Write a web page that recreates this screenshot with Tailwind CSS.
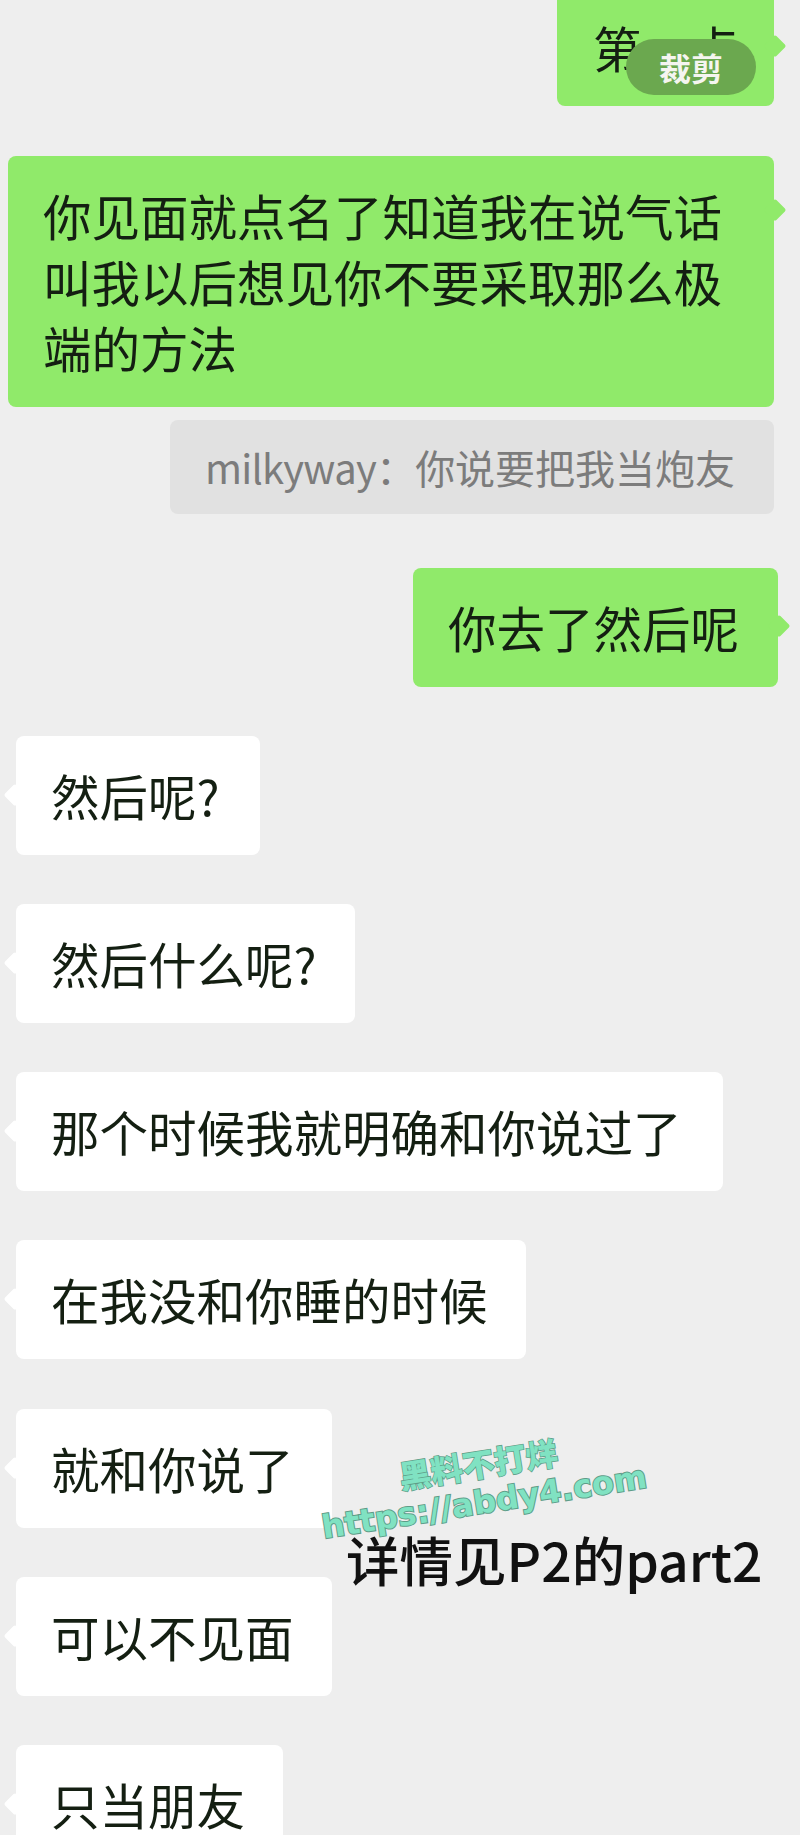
<!DOCTYPE html>
<html lang="zh-CN">
<head>
    <meta charset="UTF-8">
    <meta name="viewport" content="width=device-width, initial-scale=1.0">
    <script src="https://cdn.jsdelivr.net/npm/@tailwindcss/browser@4"></script>
    <title>聊天记录</title>
</head>
<body class="bg-[#eeeeee]">
    <div class="relative h-[1835px] w-[800px] overflow-hidden bg-[#eeeeee] font-['Noto_Sans_CJK_SC','Noto_Sans',sans-serif] text-[48.5px] leading-[66px] text-[#141f12]">
        <div class="flex flex-col items-start">
            <!-- outgoing -->
            <div class="relative mt-[-12px] ml-[557px] h-[118px] w-[217px] rounded-lg bg-[#90ea6a] py-[26px] pl-[36px] whitespace-nowrap">
                第一点
                <div class="absolute top-[50px] right-[-9px] size-[16px] rotate-45 rounded-[2px] bg-[#90ea6a]"></div>
                <div class="absolute top-[51px] left-[69px] flex h-[56px] w-[130px] items-center justify-center rounded-full bg-[#6ba84f] text-[32px] leading-none font-bold text-[#f5f5f0]">裁剪</div>
            </div>

            <div class="relative mt-[50px] ml-[8px] h-[251px] w-[766px] rounded-lg bg-[#90ea6a] py-[26px] pl-[35px]">
                <p>你见面就点名了知道我在说气话</p>
                <p>叫我以后想见你不要采取那么极</p>
                <p>端的方法</p>
                <div class="absolute top-[46px] right-[-9px] size-[16px] rotate-45 rounded-[2px] bg-[#90ea6a]"></div>
            </div>

            <div class="mt-[13px] ml-[170px] flex h-[94px] w-[604px] items-center rounded-lg bg-[#e1e1e1] pl-[35px] text-[40px] leading-none whitespace-nowrap text-[#7c7c7c]"><span class="tracking-[-0.8px]">milkyway：</span>你说要把我当炮友</div>

            <div class="relative mt-[54px] ml-[413px] h-[119px] w-[365px] rounded-lg bg-[#90ea6a] py-[26px] pl-[35px] whitespace-nowrap">
                你去了然后呢
                <div class="absolute top-[50px] right-[-9px] size-[16px] rotate-45 rounded-[2px] bg-[#90ea6a]"></div>
            </div>

            <!-- incoming -->
            <div class="relative mt-[49px] ml-[16px] h-[119px] w-[244px] rounded-lg bg-white py-[26px] pl-[35px] whitespace-nowrap">
                然后呢?
                <div class="absolute top-[51px] left-[-9px] size-[16px] rotate-45 rounded-[2px] bg-white"></div>
            </div>
            <div class="relative mt-[49px] ml-[16px] h-[119px] w-[339px] rounded-lg bg-white py-[26px] pl-[35px] whitespace-nowrap">
                然后什么呢?
                <div class="absolute top-[51px] left-[-9px] size-[16px] rotate-45 rounded-[2px] bg-white"></div>
            </div>
            <div class="relative mt-[49px] ml-[16px] h-[119px] w-[707px] rounded-lg bg-white py-[26px] pl-[35px] whitespace-nowrap">
                那个时候我就明确和你说过了
                <div class="absolute top-[51px] left-[-9px] size-[16px] rotate-45 rounded-[2px] bg-white"></div>
            </div>
            <div class="relative mt-[49px] ml-[16px] h-[119px] w-[510px] rounded-lg bg-white py-[26px] pl-[35px] whitespace-nowrap">
                在我没和你睡的时候
                <div class="absolute top-[51px] left-[-9px] size-[16px] rotate-45 rounded-[2px] bg-white"></div>
            </div>
            <div class="relative mt-[50px] ml-[16px] h-[119px] w-[316px] rounded-lg bg-white py-[26px] pl-[35px] whitespace-nowrap">
                就和你说了
                <div class="absolute top-[51px] left-[-9px] size-[16px] rotate-45 rounded-[2px] bg-white"></div>
            </div>
            <div class="relative mt-[49px] ml-[16px] h-[119px] w-[316px] rounded-lg bg-white py-[26px] pl-[35px] whitespace-nowrap">
                可以不见面
                <div class="absolute top-[51px] left-[-9px] size-[16px] rotate-45 rounded-[2px] bg-white"></div>
            </div>
            <div class="relative mt-[49px] ml-[16px] h-[118px] w-[267px] rounded-lg bg-white py-[26px] pl-[35px] whitespace-nowrap">
                只当朋友
                <div class="absolute top-[51px] left-[-9px] size-[16px] rotate-45 rounded-[2px] bg-white"></div>
            </div>
        </div>

        <!-- caption + watermark over the chat -->
        <div class="absolute top-[1526px] left-[346px] text-[53.5px] leading-[66px] font-medium whitespace-nowrap text-[#111111]">详情见P2的part2</div>
        <div class="absolute top-[1443px] left-[398px] rotate-[-9deg] text-[32px] leading-[40px] font-black whitespace-nowrap text-[#80e2c2] [-webkit-text-stroke:1.5px_#5f9c88] [paint-order:stroke_fill]">黑料不打烊</div>
        <div class="absolute top-[1480px] left-[320px] rotate-[-9deg] font-['DejaVu_Sans',sans-serif] text-[32px] leading-[44px] font-bold whitespace-nowrap text-[#80e2c2] [-webkit-text-stroke:2px_#5f9c88] [paint-order:stroke_fill]">https://abdy4.com</div>
    </div>
</body>
</html>
